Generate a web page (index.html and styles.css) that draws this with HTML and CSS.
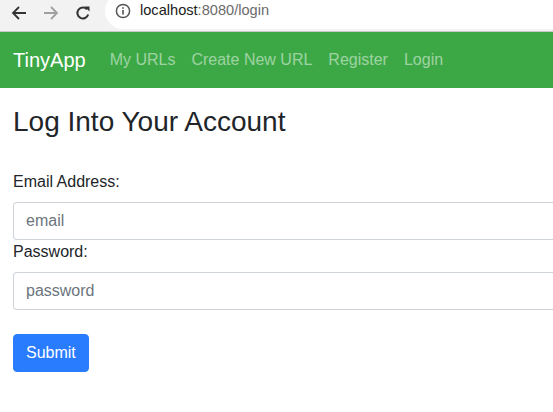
FILE: index.html
```html
<!DOCTYPE html>
<html lang="en">
<head>
<meta charset="utf-8">
<title>TinyApp - Login</title>
<link rel="stylesheet" href="styles.css">
</head>
<body>
<div class="browser-bar">
  <div class="nav-btns">
    <svg class="ic" width="16" height="16" viewBox="0 0 16 16"><path d="M15 8H2.5M8 2L2 8l6 6" fill="none" stroke="#333" stroke-width="1.8"/></svg>
    <svg class="ic" width="16" height="16" viewBox="0 0 16 16"><path d="M1 8h12.5M8 2l6 6-6 6" fill="none" stroke="#a0a0a0" stroke-width="1.8"/></svg>
    <svg class="ic" width="16" height="16" viewBox="0 0 16 16"><path d="M13.2 9.5A5.5 5.5 0 1 1 12 4.3" fill="none" stroke="#333" stroke-width="2"/><path d="M9.5 1.5h5v5z" fill="#333"/></svg>
  </div>
  <div class="omnibox">
    <svg class="info" width="16" height="16" viewBox="0 0 16 16"><circle cx="8" cy="8" r="6.6" fill="none" stroke="#555" stroke-width="1.5"/><rect x="7.2" y="7" width="1.6" height="4.6" fill="#555"/><rect x="7.2" y="4.2" width="1.6" height="1.6" fill="#555"/></svg>
    <span class="url"><span class="host">localhost</span>:8080/login</span>
  </div>
</div>
<nav class="navbar">
  <a class="brand" href="#">TinyApp</a>
  <a class="nav-link" href="#">My URLs</a>
  <a class="nav-link" href="#">Create New URL</a>
  <a class="nav-link" href="#">Register</a>
  <a class="nav-link" href="#">Login</a>
</nav>
<main class="container">
  <h3 class="title">Log Into Your Account</h3>
  <form class="login-form">
    <label class="field-label" for="email">Email Address:</label>
    <input class="form-control" id="email" type="text" placeholder="email">
    <label class="field-label" for="password">Password:</label>
    <input class="form-control" id="password" type="password" placeholder="password">
    <button class="btn-primary" type="button">Submit</button>
  </form>
</main>
</body>
</html>
```
FILE: styles.css
```css
html, body {
  margin: 0;
  padding: 0;
  overflow: hidden;
  background: #fff;
}
body {
  font-family: "Liberation Sans", Arial, sans-serif;
  font-size: 16px;
  line-height: 1.5;
  color: #212529;
}
.browser-bar {
  height: 31px;
  background: #f2f2f2;
  border-bottom: 1px solid #c9c9c9;
  display: flex;
  align-items: center;
  overflow: hidden;
}
.nav-btns {
  display: flex;
  align-items: center;
  gap: 16px;
  padding-left: 11px;
  margin-top: -6px;
  width: 94px;
}
.ic { display: block; }
.omnibox {
  flex: 1;
  height: 36px;
  margin-top: -10px;
  background: #fff;
  border-radius: 18px 0 0 18px;
  display: flex;
  align-items: center;
  padding-top: 7px;
  box-sizing: border-box;
  padding-left: 10px;
}
.info { display: block; margin-right: 9px; margin-top: -7px; }
.url {
  font-size: 14.6px;
  color: #6b6b6b;
  margin-top: -7px;
}
.host { color: #202020; }
.navbar {
  height: 56px;
  background: #3ca845;
  display: flex;
  align-items: center;
  padding: 0 13px;
  box-sizing: border-box;
}
.navbar a { text-decoration: none; }
.brand {
  color: #fff;
  font-size: 20px;
  line-height: 30px;
  margin-right: 16px;
}
.nav-link {
  color: rgba(255, 255, 255, 0.5);
  padding: 8px;
  line-height: 24px;
}
.container {
  padding: 0 0 0 13px;
}
.title {
  font-size: 28px;
  line-height: 1.2;
  margin: 17px 0 0;
  font-weight: normal;
}
.login-form {
  margin-top: 31px;
  display: flex;
  flex-direction: column;
  align-items: flex-start;
}
.field-label {
  display: block;
  margin-bottom: 8px;
}
.form-control {
  display: block;
  box-sizing: border-box;
  width: 100%;
  height: 38px;
  padding: 6px 12px;
  font-family: inherit;
  font-size: 16px;
  color: #495057;
  background: #fff;
  border: 1px solid #ced4da;
  border-right: 0;
  border-radius: 4px 0 0 4px;
  margin: 0;
}
.form-control::placeholder { color: #6c757d; opacity: 1; }
.btn-primary {
  margin-top: 24px;
  height: 38px;
  padding: 6px 12px;
  font-family: inherit;
  font-size: 16px;
  line-height: 24px;
  color: #fff;
  background: #2a7cff;
  border: 1px solid #2a7cff;
  border-radius: 4px;
}
```
